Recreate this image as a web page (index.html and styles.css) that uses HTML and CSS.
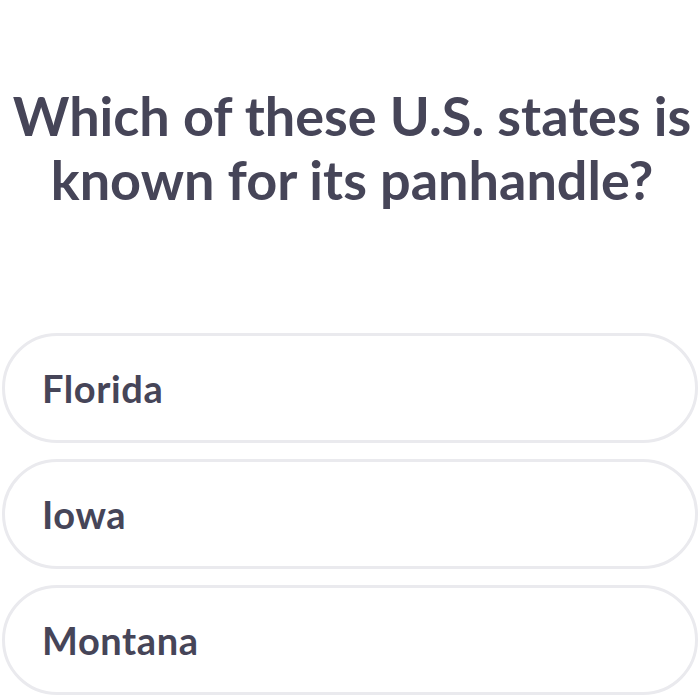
FILE: index.html
```html
<!DOCTYPE html>
<html lang="en">
<head>
<meta charset="utf-8">
<link rel="stylesheet" href="styles.css">
</head>
<body>
<main class="quiz">
  <h1 class="question">Which of these U.S. states is known for its panhandle?</h1>
  <div class="options">
    <div class="option">Florida</div>
    <div class="option">Iowa</div>
    <div class="option">Montana</div>
  </div>
</main>
</body>
</html>
```
FILE: styles.css
```css
html, body {
  margin: 0;
  padding: 0;
  background: #ffffff;
}
body {
  font-family: "Lato", "Noto Sans", sans-serif;
  color: #464558;
}
.quiz {
  width: 700px;
  height: 700px;
  overflow: hidden;
  display: flex;
  flex-direction: column;
}
.question {
  margin: 0;
  padding: 84px 4px 0 8px;
  height: 333px;
  flex: none;
  box-sizing: border-box;
  text-align: center;
  font-size: 54px;
  line-height: 64px;
  font-weight: 700;
  letter-spacing: 0;
}
.options {
  display: flex;
  flex-direction: column;
  gap: 16px;
  padding-left: 2px;
}
.option {
  width: 696px;
  height: 110px;
  flex: none;
  box-sizing: border-box;
  border: 3px solid #eaeaee;
  border-radius: 55px;
  display: flex;
  align-items: center;
  padding-left: 37px;
  font-size: 38px;
  font-weight: 700;
  letter-spacing: 0.6px;
}
```
